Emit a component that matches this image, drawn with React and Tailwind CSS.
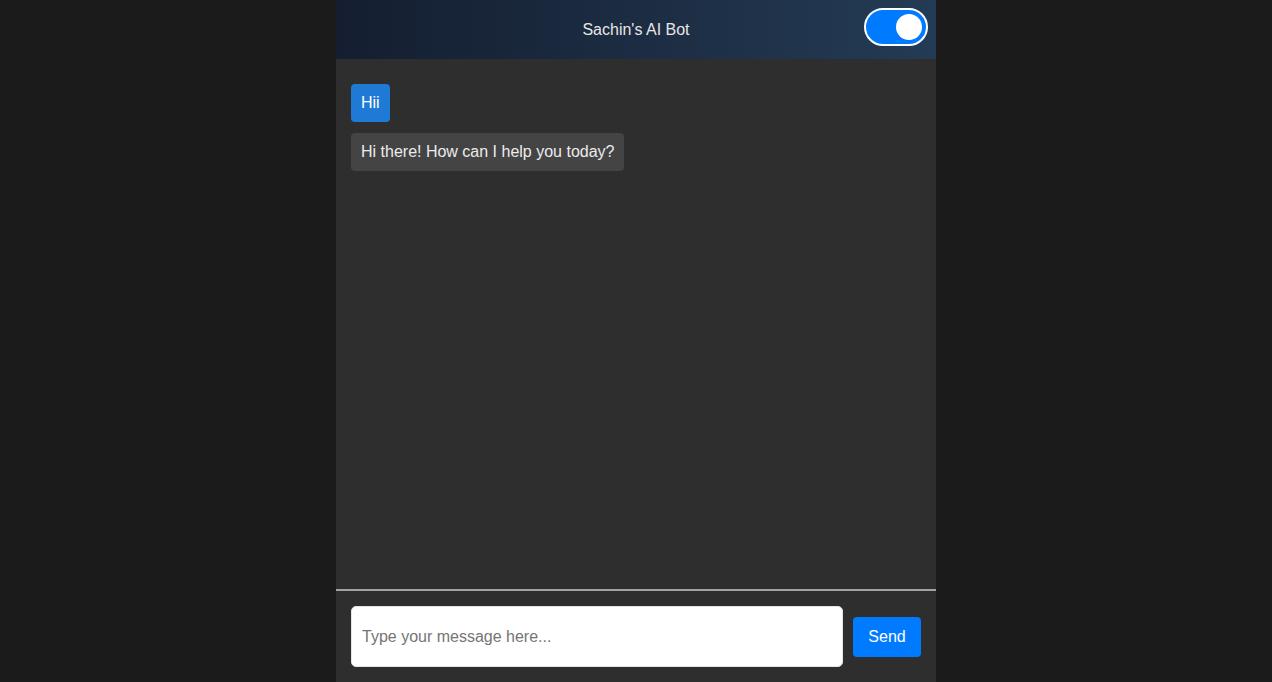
export default function App() {
  return (
    <div className="w-full h-[682px] bg-[#1b1b1b] flex justify-center" style={{ fontFamily: '"Liberation Sans", Arial, sans-serif' }}>
      <div className="w-[600px] h-full flex flex-col bg-[#2e2e2e]">
        <div className="relative h-[59px] shrink-0 flex items-center justify-center bg-gradient-to-r from-[#141e30] to-[#243b55]">
          <span className="text-[16px] text-[#e6e6e6]">Sachin's AI Bot</span>
          <div className="absolute right-[8px] top-[8px] w-[64px] h-[38px] rounded-full bg-[#007bff] border-2 border-white flex items-center justify-end pr-[4px]">
            <div className="w-[26px] h-[26px] rounded-full bg-white" />
          </div>
        </div>
        <div className="flex-1 flex flex-col items-start gap-[11px] px-[15px] pt-[25px]">
          <div className="bg-[#1f7ad6] text-white text-[16px] leading-[18px] px-[10px] py-[10px] rounded-[4px]">Hii</div>
          <div className="bg-[#444444] text-[#ececec] text-[16px] leading-[18px] px-[10px] py-[10px] rounded-[4px]">Hi there! How can I help you today?</div>
        </div>
        <div className="h-[2px] bg-[#a3a3a3] shrink-0" />
        <div className="shrink-0 flex items-center gap-[10px] px-[15px] pt-[15px] pb-[15px]">
          <input
            className="flex-1 h-[61px] bg-white rounded-[5px] px-[10px] text-[16px] text-[#333] placeholder:text-[#757575] outline-none border border-[#e5e5e5]"
            placeholder="Type your message here..."
            style={{ fontFamily: '"Liberation Sans", Arial, sans-serif' }}
          />
          <button className="w-[68px] h-[40px] bg-[#007bff] text-white text-[16px] rounded-[4px]" style={{ fontFamily: '"Liberation Sans", Arial, sans-serif' }}>Send</button>
        </div>
      </div>
    </div>
  );
}
